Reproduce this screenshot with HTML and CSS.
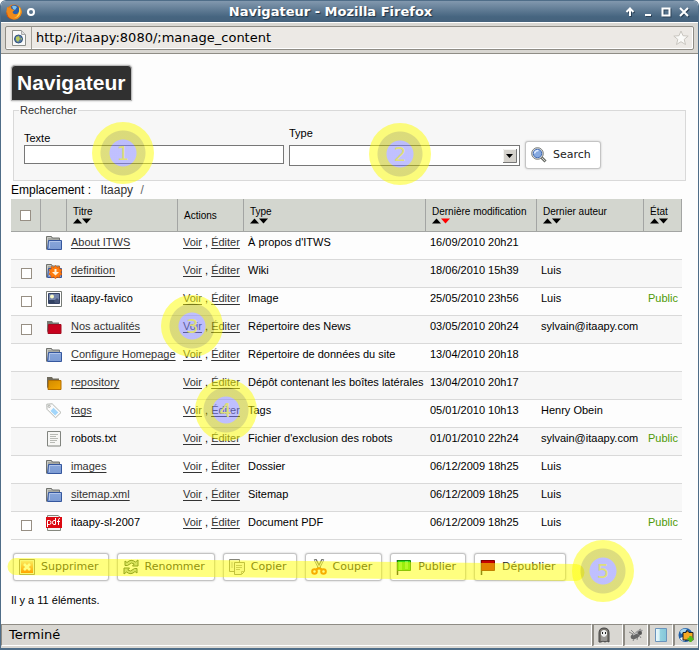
FILE: index.html
```html
<!DOCTYPE html>
<html lang="fr">
<head>
<meta charset="utf-8">
<title>Navigateur - Mozilla Firefox</title>
<link rel="stylesheet" href="styles.css">
</head>
<body>
<svg class="defs" aria-hidden="true">
  <defs>
    <linearGradient id="g-blue" x1="0" y1="0" x2="0" y2="1"><stop offset="0" stop-color="#88a6da"/><stop offset="1" stop-color="#7c9bd3"/></linearGradient>
    <linearGradient id="g-orange" x1="0" y1="0" x2="0" y2="1"><stop offset="0" stop-color="#f6d9b8"/><stop offset="1" stop-color="#ff4a00"/></linearGradient>
    <linearGradient id="g-amber" x1="0" y1="0" x2="1" y2="1"><stop offset="0" stop-color="#d08a00"/><stop offset="1" stop-color="#f5a700"/></linearGradient>
    <linearGradient id="g-cyan" x1="0" y1="0" x2="1" y2="0"><stop offset="0" stop-color="#eef9fc"/><stop offset=".35" stop-color="#d5f0f6"/><stop offset=".4" stop-color="#94d2e0"/><stop offset="1" stop-color="#84c6d8"/></linearGradient>
  </defs>
  <symbol id="folder" viewBox="0 0 16 16">
    <path d="M.5 14.5V1.5h5l1 1.500h7v2.500" fill="#a6a8a3" stroke="#70726e"/>
    <path d="M1.500 14V2.500h3.500" fill="none" stroke="#c9cbc6"/>
    <path d="M2.500 5.500h13v9h-14z" fill="url(#g-blue)" stroke="#35579e"/>
    <path d="M3.500 13V6.500h11" fill="none" stroke="#b0c4ea"/>
  </symbol>
  <symbol id="wiki" viewBox="0 0 16 16">
    <use href="#folder"/>
    <path d="M9.500 2.500l1.500 2 2.500-1 .3 2.600 2.200.7-1.200 2.300 1.200 2.400-2.300.8-.2 2.400-2.500-.7-1.500 1.800-1.800-1.800-2.500.7-.2-2.500L3 11.500l1.200-2.400L3 6.800l2.300-.7.2-2.600 2.500 1z" fill="#ff7b0d" stroke="#d95800" stroke-width=".7"/>
    <path d="M8.500 6h2v3H13l-3.500 3.500L6 9h2.500z" fill="#fff1d8"/>
  </symbol>
  <symbol id="image" viewBox="0 0 16 16">
    <path d="M.5.5h15v15H.5z" fill="#fff" stroke="#777b76"/>
    <path d="M2.500 2.500h11v10h-11z" fill="#7283a9" stroke="#354264"/>
    <path d="M3 9h10v3H3z" fill="#304062"/><path d="M8 10l3-3 2 2v3H9z" fill="#465477"/>
    <circle cx="6" cy="5.500" r="2" fill="#fafac8"/>
  </symbol>
  <symbol id="news" viewBox="0 0 16 16">
    <path d="M1 13V2h5l1 1.500h6V6z" fill="#777b75"/><path d="M2.500 5.500h12.500v9h-13z" fill="#c8001d" stroke="#a30a1f"/>
  </symbol>
  <symbol id="repository" viewBox="0 0 16 16">
    <path d="M1 13V2h5l1 1.500h6V6z" fill="#6f6a5c"/><path d="M2.500 5.500h12.500v9h-13z" fill="url(#g-amber)" stroke="#b56f00"/>
  </symbol>
  <symbol id="tag" viewBox="0 0 16 16">
    <path d="M.8 1.200l5.400-.4 8.800 8.700-5.500 5.300-8.500-8.500z" fill="#fbfbfb" stroke="#b4b7b2"/>
    <circle cx="3.200" cy="3.300" r="1.100" fill="#fff" stroke="#9a9d98" stroke-width=".8"/>
    <path d="M7.500 4.800l4.800 4.800-3.200 3-4.600-4.700z" fill="#a2d6fb"/>
  </symbol>
  <symbol id="text" viewBox="0 0 16 16">
    <path d="M1.500.5h13v14.500h-13z" fill="#f7f7f5" stroke="#81847f"/>
    <path d="M4 3.500h8M4 5.500h6M4 7.500h8M4 9.500h7M4 11.500h5" stroke="#b8bab5"/>
  </symbol>
  <symbol id="pdf" viewBox="0 0 16 16">
    <path d="M1.500.5H12l2.500 2v13h-13z" fill="#f5f5f5" stroke="#85887f"/>
    <path d="M0 2h16v11H0z" fill="#dc0a12"/>
    <path d="M1.500 12V5.500h2a1.500 2 0 010 4h-2M9.500 3v6.500H8a1.500 2 0 010-4h1.500M12.500 10V4.500q0-1 1.500-1M11 6.500h3" fill="none" stroke="#fff"/>
  </symbol>
  <symbol id="search" viewBox="0 0 16 16">
    <path d="M10 10l4.500 4.500" stroke="#6a6d68" stroke-width="3"/><path d="M11 11l3 3" stroke="#d2d4ce" stroke-width="1"/>
    <circle cx="6.500" cy="6.500" r="5.800" fill="#d7dae0" stroke="#777a76"/>
    <circle cx="6.500" cy="6.500" r="4.200" fill="#86a9e0" stroke="#466fb5"/>
    <path d="M3.500 6.500q.5-3 4-3" stroke="#deebff" fill="none" stroke-width="1.500"/>
  </symbol>
  <symbol id="remove" viewBox="0 0 16 16">
    <path d="M.5.5h15v15H.5z" fill="#f5eee4" stroke="#8a8070"/><path d="M2 2h12v12H2z" fill="url(#g-orange)"/>
    <path d="M5 5l6 6M11 5l-6 6" stroke="#fff" stroke-width="2.600"/>
  </symbol>
  <symbol id="rename" viewBox="0 0 16 16">
    <path d="M2 6.500V2l2 1.500Q8-.5 12.500 3L15 1v6H9.500l1.700-2Q8.500 2.800 6 5.500 5 7 2 6.500z" fill="#b3c9b6" stroke="#33523a"/>
    <path d="M14 9.500V14l-2-1.500Q8 16.500 3.500 13L1 15V9h5.500l-1.700 2Q7.500 13.200 10 10.500q1-1.500 4-1z" fill="#b3c9b6" stroke="#33523a"/>
  </symbol>
  <symbol id="copy" viewBox="0 0 16 16">
    <path d="M.5.5h10v12H.5z" fill="#f4f4ef" stroke="#85857a"/>
    <path d="M2 4h2M2 6h2M2 8h2" stroke="#aaa"/>
    <path d="M5.500 3.500h10v9l-3 3h-7z" fill="#f4f4ef" stroke="#85857a"/>
    <path d="M7 6.500h6M7 8.500h6M7 10.500h4M12.500 15v-2.500H15" fill="none" stroke="#a5a598"/>
  </symbol>
  <symbol id="cut" viewBox="0 0 16 16">
    <path d="M4 0l5 10M12 0L7 10" stroke="#6e716b" stroke-width="2.800"/><path d="M4 1l5 9M12 1l-5 9" stroke="#eee" stroke-width="1.100"/>
    <g fill="#fff" stroke="#ee5a00" stroke-width="2"><circle cx="3.500" cy="12.500" r="2.300"/><circle cx="12.500" cy="12.500" r="2.300"/><path d="M5 10.500L8 9l3 1.500" fill="none"/></g>
  </symbol>
  <symbol id="flag-green" viewBox="0 0 16 16">
    <path d="M1.500 1v15" stroke="#222" stroke-width="1.500"/><path d="M1.500 1.500h13v10h-13z" fill="#35dc18" stroke="#168b0c"/><path d="M3 3h3v8H3zM9 2h3v8H9z" fill="#6cf04d"/>
  </symbol>
  <symbol id="flag-red" viewBox="0 0 16 16">
    <path d="M1.500 1v15" stroke="#222" stroke-width="1.500"/><path d="M1.500 1.500h13v10h-13z" fill="#c60000" stroke="#850000"/>
  </symbol>
</svg>

<div class="window">
  <header class="titlebar">
    <svg class="firefox" viewBox="0 0 16 16" aria-hidden="true">
      <circle cx="8" cy="8" r="7.500" fill="#e9780e"/><circle cx="8.500" cy="6" r="5" fill="#2c5fa8"/>
      <path d="M6 2q3-1 5 1L9 6 7 5z" fill="#7fc0ea"/>
      <path d="M1 3l2 1 2-1 .5 2 3 1-2 2q1 3 4 2 3-1 3-4l-.5-4Q17 5 15.500 10 13 15.500 8 15.500 0 15 .5 8z" fill="#f08a1a"/>
      <path d="M13 3q2.500 3 1 7Q12 14 8 14q6-2 5-11z" fill="#ffd348"/><path d="M1 8q0 6 6 7.500Q1 15 .5 9z" fill="#c23a05"/>
    </svg>
    <svg class="dot" viewBox="0 0 10 10" aria-hidden="true"><circle cx="5" cy="5" r="3" fill="none" stroke="#fff" stroke-width="2"/></svg>
    <div class="window-title">Navigateur - Mozilla Firefox</div>
    <div class="window-controls">
      <button aria-label="Enrouler"><svg viewBox="0 0 10 10"><path d="M5 9V2M1.500 5L5 1.500 8.500 5" /></svg></button>
      <button aria-label="Réduire"><svg viewBox="0 0 10 10"><path d="M2 8h6"/></svg></button>
      <button aria-label="Agrandir"><svg viewBox="0 0 10 10"><path d="M1.500 1.500h7v7h-7z"/></svg></button>
      <button aria-label="Fermer"><svg viewBox="0 0 10 10"><path d="M1 1l8 8M9 1L1 9"/></svg></button>
    </div>
  </header>

  <div class="location-bar">
    <div class="location">
      <span class="identity">
        <svg viewBox="0 0 16 16" aria-hidden="true"><path d="M1.500.5h9l4 4v11h-13z" fill="#fafafa" stroke="#8c8f8a"/><path d="M10.500.5v4h4" fill="#ddd" stroke="#aaa"/><circle cx="7.500" cy="9" r="4" fill="#5577a3" stroke="#34567f"/><path d="M5 7l3-1 1 3-2 3-2-2zM9.500 7.500l1.500 1-1 2z" fill="#b8c95c"/></svg>
      </span>
      <input class="url" aria-label="Adresse" value="http://itaapy:8080/;manage_content">
      <svg class="star" viewBox="0 0 16 16" aria-hidden="true"><path d="M8 1l2 4.700 5.200.4-4 3.300 1.300 5.100L8 11.700l-4.500 2.800 1.300-5.100-4-3.300L6 5.700z" fill="#fafaf8" stroke="#c8c5bf"/></svg>
    </div>
  </div>

  <main class="page">
    <h1>Navigateur</h1>

    <form>
      <fieldset class="search">
        <legend>Rechercher</legend>
        <div class="field field-text">
          <label for="search-text">Texte</label>
          <input id="search-text" type="text">
          <span class="marker marker-text">1</span>
        </div>
        <div class="field field-type">
          <label for="search-type">Type</label>
          <select id="search-type"><option></option></select>
          <svg class="drop" viewBox="0 0 14 14" aria-hidden="true"><path d="M0 0h14v14H0z" fill="#d5d2cc"/><path d="M.5 13V.5H13" fill="none" stroke="#f4f4f2"/><path d="M13.500 0v13.500H0" fill="none" stroke="#777"/><path d="M3 5h7L6.500 9z" fill="#000"/></svg>
          <span class="marker marker-type">2</span>
        </div>
        <button class="btn" type="button"><svg aria-hidden="true"><use href="#search"/></svg>Search</button>
      </fieldset>
    </form>

    <nav class="breadcrumb">Emplacement : <a href="#">Itaapy</a> <span>/</span></nav>

    <table class="listing">
      <colgroup><col class="c-check"><col class="c-icon"><col class="c-title"><col class="c-actions"><col class="c-type"><col class="c-date"><col class="c-author"><col class="c-state"></colgroup>
      <thead>
        <tr>
          <th><input type="checkbox" aria-label="Tout sélectionner"></th>
          <th></th>
          <th class="sortable">Titre<svg class="sort" viewBox="0 0 18 6"><path d="M0 5.500L4.500.5 9 5.500z"/><path d="M9 .5h9L13.500 5.500z"/></svg></th>
          <th>Actions</th>
          <th class="sortable">Type<svg class="sort" viewBox="0 0 18 6"><path d="M0 5.500L4.500.5 9 5.500z"/><path d="M9 .5h9L13.500 5.500z"/></svg></th>
          <th class="sortable">Dernière modification<svg class="sort" viewBox="0 0 18 6"><path d="M0 5.500L4.500.5 9 5.500z"/><path class="active" d="M9 .5h9L13.500 5.500z"/></svg></th>
          <th class="sortable">Dernier auteur<svg class="sort" viewBox="0 0 18 6"><path d="M0 5.500L4.500.5 9 5.500z"/><path d="M9 .5h9L13.500 5.500z"/></svg></th>
          <th class="sortable">État<svg class="sort" viewBox="0 0 18 6"><path d="M0 5.500L4.500.5 9 5.500z"/><path d="M9 .5h9L13.500 5.500z"/></svg></th>
        </tr>
      </thead>
      <tbody>
        <tr><td></td><td><svg class="icon"><use href="#folder"/></svg></td><td><a href="#">About ITWS</a></td><td><a href="#">Voir</a> , <a href="#">Éditer</a></td><td>À propos d'ITWS</td><td>16/09/2010 20h21</td><td></td><td></td></tr>
        <tr><td><input type="checkbox" aria-label="definition"></td><td><svg class="icon"><use href="#wiki"/></svg></td><td><a href="#">definition</a></td><td><a href="#">Voir</a> , <a href="#">Éditer</a></td><td>Wiki</td><td>18/06/2010 15h39</td><td>Luis</td><td></td></tr>
        <tr><td><input type="checkbox" aria-label="itaapy-favico"></td><td><svg class="icon"><use href="#image"/></svg></td><td>itaapy-favico</td><td><a href="#">Voir</a> , <a href="#">Éditer</a></td><td>Image</td><td>25/05/2010 23h56</td><td>Luis</td><td class="public">Public</td></tr>
        <tr><td><input type="checkbox" aria-label="Nos actualités"></td><td><svg class="icon"><use href="#news"/></svg></td><td><a href="#">Nos actualités</a></td><td><span class="anchor"><a href="#">Voir</a><span class="marker marker-row">3</span></span> , <a href="#">Éditer</a></td><td>Répertoire des News</td><td>03/05/2010 20h24</td><td>sylvain@itaapy.com</td><td></td></tr>
        <tr><td></td><td><svg class="icon"><use href="#folder"/></svg></td><td><a href="#">Configure Homepage</a></td><td><a href="#">Voir</a> , <a href="#">Éditer</a></td><td>Répertoire de données du site</td><td>13/04/2010 20h18</td><td></td><td></td></tr>
        <tr><td></td><td><svg class="icon"><use href="#repository"/></svg></td><td><a href="#">repository</a></td><td><a href="#">Voir</a> , <a href="#">Éditer</a></td><td>Dépôt contenant les boîtes latérales</td><td>13/04/2010 20h17</td><td></td><td></td></tr>
        <tr><td></td><td><svg class="icon"><use href="#tag"/></svg></td><td><a href="#">tags</a></td><td><a href="#">Voir</a> , <span class="anchor"><a href="#">Éditer</a><span class="marker marker-row">4</span></span></td><td>Tags</td><td>05/01/2010 10h13</td><td>Henry Obein</td><td></td></tr>
        <tr><td></td><td><svg class="icon"><use href="#text"/></svg></td><td>robots.txt</td><td><a href="#">Voir</a> , <a href="#">Éditer</a></td><td>Fichier d'exclusion des robots</td><td>01/01/2010 22h24</td><td>sylvain@itaapy.com</td><td class="public">Public</td></tr>
        <tr><td></td><td><svg class="icon"><use href="#folder"/></svg></td><td><a href="#">images</a></td><td><a href="#">Voir</a> , <a href="#">Éditer</a></td><td>Dossier</td><td>06/12/2009 18h25</td><td>Luis</td><td></td></tr>
        <tr><td></td><td><svg class="icon"><use href="#folder"/></svg></td><td><a href="#">sitemap.xml</a></td><td><a href="#">Voir</a> , <a href="#">Éditer</a></td><td>Sitemap</td><td>06/12/2009 18h25</td><td>Luis</td><td></td></tr>
        <tr><td><input type="checkbox" aria-label="itaapy-sl-2007"></td><td><svg class="icon"><use href="#pdf"/></svg></td><td>itaapy-sl-2007</td><td><a href="#">Voir</a> , <a href="#">Éditer</a></td><td>Document PDF</td><td>06/12/2009 18h25</td><td>Luis</td><td class="public">Public</td></tr>
      </tbody>
    </table>

    <div class="actions">
      <button class="btn" type="button"><svg aria-hidden="true"><use href="#remove"/></svg>Supprimer</button>
      <button class="btn" type="button"><svg aria-hidden="true"><use href="#rename"/></svg>Renommer</button>
      <button class="btn" type="button"><svg aria-hidden="true"><use href="#copy"/></svg>Copier</button>
      <button class="btn" type="button"><svg aria-hidden="true"><use href="#cut"/></svg>Couper</button>
      <button class="btn" type="button"><svg aria-hidden="true"><use href="#flag-green"/></svg>Publier</button>
      <button class="btn" type="button"><svg aria-hidden="true"><use href="#flag-red"/></svg>Dépublier</button>
      <svg class="highlight" viewBox="0 0 578 26" aria-hidden="true"><path d="M9 9.500L300 12.500 569 15.500"/></svg>
      <span class="marker marker-actions">5</span>
    </div>
    <p class="count">Il y a 11 éléments.</p>
  </main>

  <footer class="statusbar">
    <div class="panel panel-text">Terminé</div>
    <div class="panel panel-ghost"><svg viewBox="0 0 16 16" aria-hidden="true"><path d="M2 15V6q0-5 5-5t5 5v9l-2-1-2 1-2-1-2 1z" fill="#77736c" stroke="#444"/><path d="M4 6q0-3 3-3t3 3v2q-3 4-6 0z" fill="#eee"/><path d="M5 6h1M8 6h1" stroke="#222" stroke-width="2"/><path d="M5 9v5M7 10v4M9 9v5" stroke="#bbb"/></svg></div>
    <div class="panel"><svg viewBox="0 0 16 16" aria-hidden="true"><path d="M1 5l4 2M3 3l3 3M5 14l2-4M9 13l1-4M13 11l-2-3M11 3l2-1" stroke="#888"/><ellipse cx="7" cy="9" rx="4.500" ry="2.800" transform="rotate(-25 7 9)" fill="#666"/><path d="M7 6q3-4 8-3l-4 5z" fill="#999"/><circle cx="12" cy="6" r="2" fill="#555"/><path d="M5 8l4-2" stroke="#ccc"/></svg></div>
    <div class="panel"><svg viewBox="0 0 16 16" aria-hidden="true"><path d="M2.500 1.500h11v13h-11z" fill="url(#g-cyan)" stroke="#6a94bd"/></svg></div>
    <div class="panel"><svg viewBox="0 0 16 16" aria-hidden="true"><circle cx="7.500" cy="8" r="7" fill="#1f5fa8"/><path d="M2 4q3-3 7-2L7 5 3 7z" fill="#a7d3ec"/><path d="M2 11l3-1 2 4q-4 0-5-3z" fill="#fff"/><path d="M5 5.500h3l1-2 2 2h4V13H5z" fill="#f7a823" stroke="#222"/><path d="M12.500 9v6M9.500 12h6" stroke="#52b916" stroke-width="2.500"/></svg></div>
  </footer>
</div>
</body>
</html>
```
FILE: styles.css
```css
* { box-sizing: border-box; }

body {
  margin: 0;
  background: #fff;
  color: #000;
  font: 11px/14px "Liberation Sans", Arial, sans-serif;
}

button, input, select { font: inherit; color: inherit; margin: 0; }
svg { display: block; }
.defs { position: absolute; width: 0; height: 0; }

/* Window frame */
.window {
  display: flex;
  flex-direction: column;
  min-height: 100vh;
  border: 1px solid #4f6d88;
  border-bottom-width: 2px;
  border-radius: 6px 6px 0 0;
  background: #fdfdfd;
  overflow: hidden;
}

.titlebar {
  display: flex;
  align-items: center;
  height: 21px;
  padding: 0 9px 0 5px;
  background: linear-gradient(#8298ae, #466580 75%, #46627c);
  color: #fff;
}
.firefox { width: 16px; height: 16px; }
.dot { width: 10px; height: 10px; margin-left: 4px; }
.window-title {
  flex: 1;
  text-align: center;
  font: bold 13px/20px "DejaVu Sans", sans-serif;
  text-shadow: 1px 1px 1px #1f3346;
}
.window-controls { display: flex; gap: 8px; }
.window-controls button { padding: 0; border: 0; background: none; }
.window-controls svg {
  width: 10px;
  height: 10px;
  fill: none;
  stroke: #fff;
  stroke-width: 2;
  filter: drop-shadow(1px 1px 0 #2b4258);
}

.location-bar {
  padding: 3px 4px;
  border-top: 1px solid #fff;
  border-bottom: 1px solid #8f8d86;
  background: #d9d7d2;
}
.location {
  display: flex;
  align-items: center;
  height: 24px;
  border: 1px solid #8f8c85;
  border-radius: 2px;
  background: #ece9e5;
  box-shadow: inset -1px -1px 0 #fff;
}
.identity {
  display: flex;
  align-items: center;
  height: 100%;
  padding: 0 4px 0 5px;
  border-right: 1px solid #a3a099;
}
.identity svg { width: 16px; height: 16px; }
.url {
  flex: 1;
  min-width: 0;
  padding: 0 4px;
  border: 0;
  background: none;
  font: 13px/20px "DejaVu Sans", sans-serif;
}
.star { width: 16px; height: 16px; margin-right: 4px; }

/* Page */
.page { flex: 1; padding: 11px 12px 8px 10px; }

h1 {
  width: fit-content;
  margin: 0;
  padding: 5px;
  border: 1px solid #bbb;
  border-radius: 4px 4px 0 0;
  background: #303030;
  color: #fff;
  font: bold 21px/24px "Liberation Sans", Arial, sans-serif;
  box-shadow: 0 0 2px #aaa;
}

.search {
  display: flex;
  align-items: flex-end;
  gap: 5px;
  margin: 2px 0 0 2px;
  padding: 9px 10px 11px;
  border: 1px solid #d9d9d9;
  background: #f7f7f7;
}
.search legend { padding: 0 1px; margin-left: -5px; color: #333; }
.field { position: relative; display: grid; }
.field-text { flex: 0 1 260px; margin-bottom: 5px; }
.field-type { flex: 0 1 231px; gap: 5px; margin-bottom: 3px; }
.field input, .field select {
  width: 100%;
  border: 1px solid #777;
  border-radius: 0;
  background: #fff;
  appearance: none;
}
.field input { height: 19px; }
.field select { height: 21px; }
.drop { position: absolute; right: 3px; bottom: 3px; width: 14px; height: 14px; pointer-events: none; }

.btn {
  display: inline-flex;
  align-items: center;
  gap: 6px;
  height: 28px;
  padding: 0 9px 0 5px;
  border: 1px solid #c4c4c4;
  border-radius: 3px;
  background: #fff;
  color: #222;
  font: 11px/16px "DejaVu Sans", sans-serif;
  box-shadow: 0 0 2px #bbb;
}
.btn svg { width: 16px; height: 16px; }

.breadcrumb { padding: 2px 0 1px; font-size: 12px; line-height: 15px; }
.breadcrumb a { margin: 0 4px 0 6px; color: #333; text-decoration: none; }
.breadcrumb span { color: #666; }

/* Listing */
.listing { width: calc(100% - 4px); border-collapse: separate; border-spacing: 0; table-layout: fixed; }
.c-check { width: 30px; }
.c-icon { width: 26px; }
.c-title { width: 111px; }
.c-actions { width: 66px; }
.c-date { width: 111px; }
.c-author { width: 107px; }
.c-state { width: 38px; }

.listing th {
  height: 33px;
  padding: 0 0 0 6px;
  border-right: 1px solid #a3a5a3;
  border-bottom: 1px solid #a3a5a3;
  background: #d3d6cf;
  text-align: left;
  font-size: 10px;
  font-weight: normal;
  line-height: 13px;
  white-space: nowrap;
}
.listing .sortable { padding-bottom: 1px; }
.sort { width: 18px; height: 6px; }
.sort .active { fill: #f00; }

.listing td {
  height: 28px;
  padding: 4px 0 0 4px;
  border-bottom: 1px solid #d9d9d9;
  vertical-align: top;
  line-height: 13px;
  white-space: nowrap;
}
.listing tbody tr:nth-child(even) { background: #f7f7f7; }
.listing td:nth-child(2) { padding: 3px 0 0 5px; }
.listing td:nth-child(4) { padding-left: 5px; }
.listing a { color: #333; text-decoration: underline; text-underline-offset: 2px; }
.listing .public { color: #4e9a06; }
.icon { width: 16px; height: 16px; }

.listing input {
  display: block;
  width: 11px;
  height: 11px;
  border: 1px solid #978f84;
  background: #fff;
  appearance: none;
}
.listing th:first-child { padding-left: 9px; }
.listing td:first-child { padding: 8px 0 0 10px; }

.actions { position: relative; display: flex; gap: 8px; margin: 13px 0 0 2px; }
.count { margin: 12px 0 0; }

/* Numbered markers over the controls */
.anchor { position: relative; }
.marker {
  position: absolute;
  width: 62px;
  height: 62px;
  border-radius: 50%;
  background: radial-gradient(circle, rgba(130, 130, 255, .5) 13px, rgba(190, 190, 0, .5) 14px, rgba(190, 190, 0, .5) 22px, rgba(255, 255, 0, .5) 23px);
  color: #dede7a;
  font: 20px/62px "DejaVu Sans", sans-serif;
  text-align: center;
  pointer-events: none;
  z-index: 2;
}
.marker-text { left: 68px; bottom: -20px; }
.marker-type { left: 80px; bottom: -19px; }
.marker-row { left: 50%; top: 50%; margin: -31px; }
.marker-actions { left: 559px; top: -13px; }
.highlight { position: absolute; left: -6px; top: 4px; width: 578px; height: 26px; pointer-events: none; }
.highlight path { fill: none; stroke: #ff0; stroke-opacity: .5; stroke-width: 17; stroke-linecap: round; }

/* Status bar */
.statusbar { display: flex; gap: 1px; background: #d9d7d2; padding-bottom: 2px; }
.panel {
  display: flex;
  align-items: center;
  height: 22px;
  padding: 0 3px;
  border: 1px solid #8f8c85;
  border-right-color: #fff;
  border-bottom-color: #fff;
  box-shadow: 1px 0 0 #8f8c85;
}
.panel svg { width: 16px; height: 16px; }
.panel-text { flex: 1; padding-left: 7px; font: 13px/20px "DejaVu Sans", sans-serif; }
.panel-ghost { padding-right: 9px; }
```
